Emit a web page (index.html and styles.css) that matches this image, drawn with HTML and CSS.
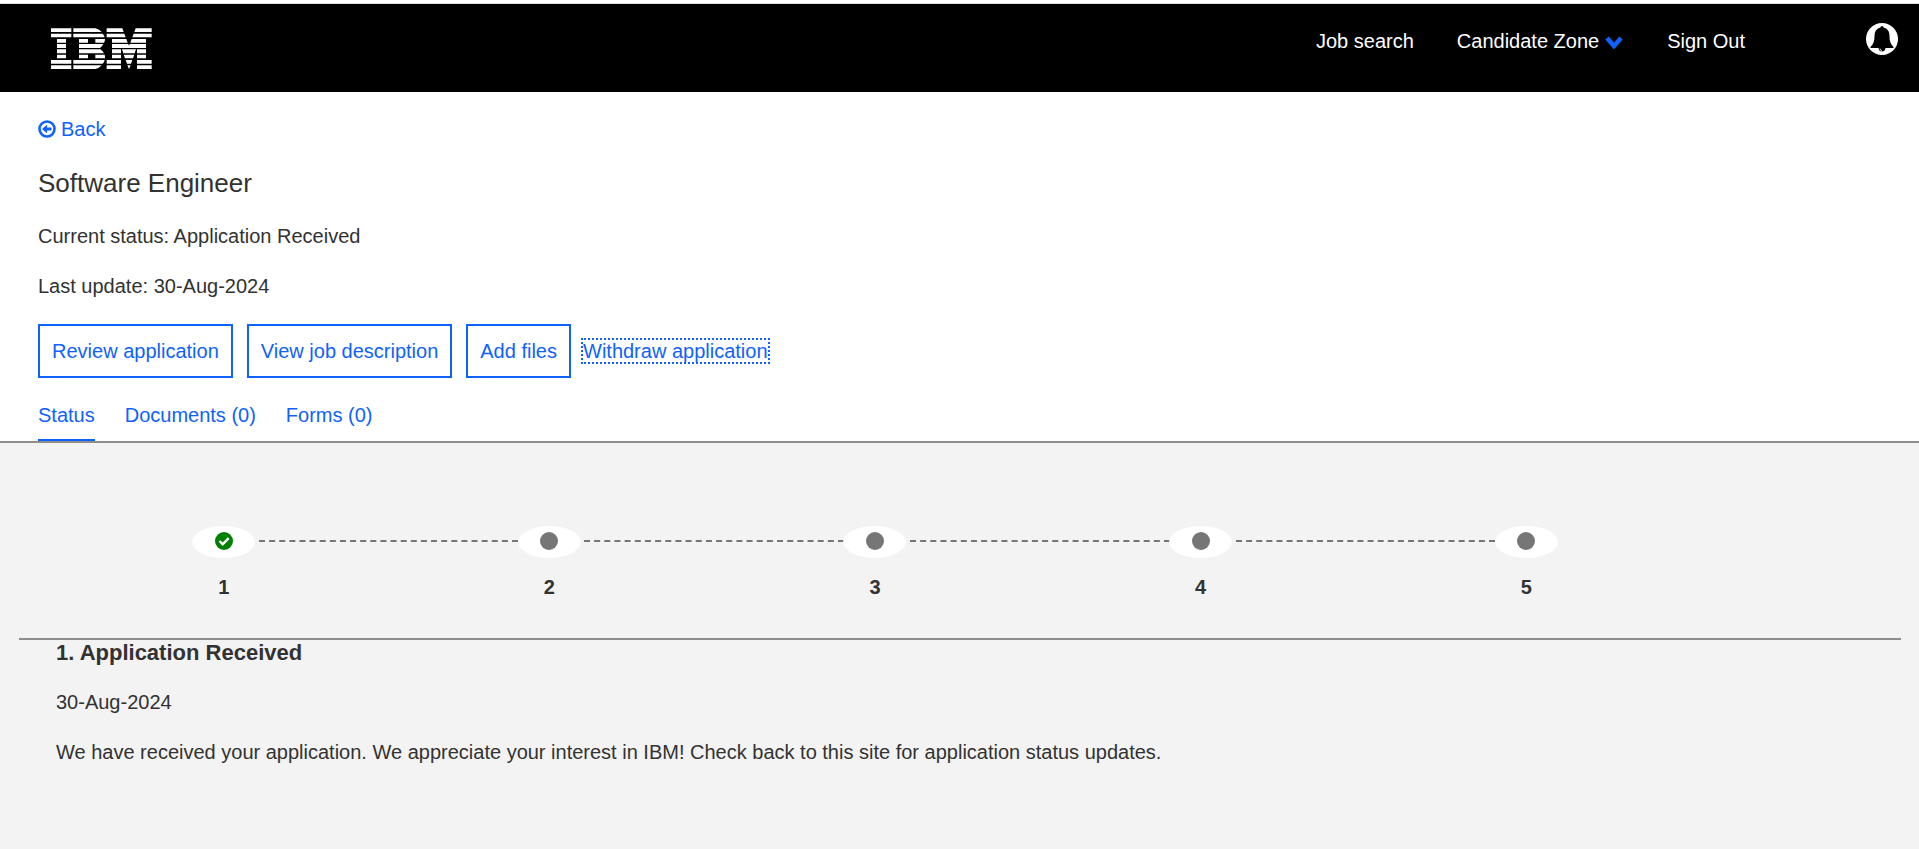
FILE: index.html
```
<!DOCTYPE html>
<html lang="en">
<head>
<meta charset="utf-8">
<title>Software Engineer - Application status</title>
<link rel="stylesheet" href="styles.css">
</head>
<body>
<header class="site-header">
  <a class="logo" href="#" aria-label="IBM">
    <svg viewBox="153 84 303 123" width="101" height="41" fill="#fff" aria-hidden="true">
      <path d="M153 85h61v11h-61zM153 101h61v11h-61zM171 117h27v11h-27zM171 132h27v12h-27zM171 148h27v12h-27zM171 164h27v11h-27zM153 180h61v11h-61zM153 196h61v11h-61z"/>
      <path d="M220 85h66q13 3 19 11h-85zM220 101h88q5 5 6 11h-94zM237 117h27v11h-27zM286 117h29q0 7-3 11h-26zM237 132h73q-4 8-10 12h-63zM237 148h64q7 4 11 12h-75zM237 164h27v11h-27zM286 164h28q2 6 1 11h-29zM220 180h94q-1 6-6 11h-88zM220 196h85q-6 8-19 11h-66z"/>
      <path d="M320 85h47l4 11h-51zM407 85h48v11h-52zM320 101h53l4 11h-57zM401 101h54v11h-58zM336 117h43l4 11h-47zM395 117h43v11h-47zM336 132h49l2 6 2-6h49v12h-102zM336 148h27v12h-27zM366 148h42l-4 12h-34zM411 148h27v12h-27zM336 164h27v11h-27zM371 164h32l-4 11h-24zM411 164h27v11h-27zM320 180h43v11h-43zM377 180h20l-4 11h-12zM411 180h44v11h-44zM320 196h43v11h-43zM382 196h10l-5 11zM411 196h44v11h-44z"/>
    </svg>
  </a>
  <nav class="main-nav" aria-label="Main">
    <a href="#">Job search</a>
    <a class="nav-menu" href="#">Candidate Zone
      <svg viewBox="0 0 20 15" width="20" height="15" aria-hidden="true"><path d="M3 4l7 8 7-8" fill="none" stroke="#0f62fe" stroke-width="4.500"/></svg>
    </a>
    <a href="#">Sign Out</a>
  </nav>
  <button class="bell" type="button" aria-label="Notifications">
    <svg viewBox="0 0 32 32" width="32" height="32" aria-hidden="true">
      <circle cx="16" cy="16" r="16" fill="#fff"/>
      <path d="M16 3q1.500 0 1.500 1.500c4 1 6 4 6 8.500 0 5 1 8 4 11v1H4.500v-1c3-3 4-6 4-11 0-4.500 2-7.500 6-8.500Q14.500 3 16 3zM12.500 25h7q-.5 3.500-3.500 3.500t-3.500-3.500z" fill="#000"/>
      <path d="M14 25.500q0 2 2 2.300" fill="none" stroke="#fff" stroke-width=".8"/>
    </svg>
  </button>
</header>
<main>
  <section class="summary">
    <a class="back" href="#">
      <svg viewBox="0 0 18 18" width="18" height="18" aria-hidden="true"><circle cx="9" cy="9" r="7.500" fill="none" stroke="#0f62fe" stroke-width="2.600"/><path d="M4 9l5-4.200v2.700h4.500v3H9v2.700z" fill="#0f62fe"/></svg>
      Back
    </a>
    <h1>Software Engineer</h1>
    <p>Current status: Application Received</p>
    <p>Last update: 30-Aug-2024</p>
    <div class="actions">
      <button class="btn" type="button">Review application</button>
      <button class="btn" type="button">View job description</button>
      <button class="btn" type="button">Add files</button>
      <a class="withdraw" href="#">Withdraw application</a>
    </div>
    <nav class="tabs" aria-label="Application">
      <a class="active" href="#">Status</a>
      <a href="#">Documents (0)</a>
      <a href="#">Forms (0)</a>
    </nav>
  </section>
  <section class="status">
    <ol class="steps">
      <li><span class="marker"><svg viewBox="0 0 18 18" width="18" height="18" aria-hidden="true"><circle cx="9" cy="9" r="9" fill="#008000"/><path d="M4.500 9l3.200 3.200 6-6" fill="none" stroke="#fff" stroke-width="2.400"/></svg></span>1</li>
      <li><span class="marker"><span class="dot"></span></span>2</li>
      <li><span class="marker"><span class="dot"></span></span>3</li>
      <li><span class="marker"><span class="dot"></span></span>4</li>
      <li><span class="marker"><span class="dot"></span></span>5</li>
    </ol>
    <div class="detail">
      <h2>1. Application Received</h2>
      <p>30-Aug-2024</p>
      <p>We have received your application. We appreciate your interest in IBM! Check back to this site for application status updates.</p>
    </div>
  </section>
</main>
</body>
</html>
```
FILE: styles.css
```
* {
  box-sizing: border-box;
}

body {
  display: flex;
  flex-direction: column;
  min-height: 100vh;
  margin: 0;
  padding-top: 3px;
  background: #fff;
  color: #323232;
  font: 20px/26px "Liberation Sans", Arial, sans-serif;
}

a {
  color: #0f62fe;
  text-decoration: none;
}

.site-header {
  display: flex;
  align-items: flex-start;
  height: 89px;
  padding: 19px 21px 0 51px;
  border-top: 1px solid #ddd;
  background: #000;
}

.logo {
  margin-top: 5px;
}

.logo svg,
.bell svg {
  display: block;
}

.main-nav {
  display: flex;
  gap: 43px;
  margin-top: 5px;
  margin-left: auto;
}

.main-nav a {
  color: #fff;
}

.nav-menu {
  display: flex;
  align-items: center;
  gap: 5px;
}

.bell {
  margin-left: 121px;
  padding: 0;
  border: 0;
  background: none;
}

main {
  display: flex;
  flex: 1;
  flex-direction: column;
}

.summary {
  padding: 24px 38px 0;
  border-bottom: 2px solid #8d8d8d;
}

.back {
  display: inline-flex;
  align-items: center;
  gap: 5px;
}

h1 {
  margin: 23px 0 24px;
  font-size: 26px;
  font-weight: 400;
  line-height: 32px;
}

p {
  margin: 0 0 24px;
}

.actions {
  display: flex;
  align-items: center;
  gap: 14px;
  margin-top: 25px;
}

.btn {
  height: 54px;
  padding: 0 12px;
  border: 2px solid #0f62fe;
  background: #fff;
  color: #0f62fe;
  font: inherit;
}

.withdraw {
  margin-left: -4px;
  border: 2px dotted #0f62fe;
  line-height: 22px;
}

.tabs {
  display: flex;
  gap: 30px;
  margin-top: 24px;
}

.tabs a {
  padding-bottom: 11px;
  border-bottom: 2px solid transparent;
}

.tabs .active {
  border-color: #0f62fe;
}

.status {
  flex: 1;
  padding: 83px 18px 0 19px;
  background: #f3f3f3;
}

.steps {
  display: grid;
  grid-template-columns: repeat(5, 1fr);
  margin: 0;
  padding: 0 212px 38px 42px;
  border-bottom: 2px solid #8d8d8d;
  list-style: none;
  font-weight: 700;
}

.steps li {
  display: flex;
  position: relative;
  flex-direction: column;
  align-items: center;
  gap: 16px;
}

.steps li:not(:last-child)::after {
  position: absolute;
  top: 14px;
  left: calc(50% + 35px);
  width: calc(100% - 66px);
  border-top: 2px dashed #767676;
  content: "";
}

.marker {
  display: flex;
  z-index: 1;
  justify-content: center;
  width: 63px;
  height: 32px;
  padding-top: 6px;
  border-radius: 50%;
  background: #fff;
}

.dot {
  width: 18px;
  height: 18px;
  border-radius: 50%;
  background: #767676;
}

.detail {
  padding: 0 37px;
}

h2 {
  margin: 0 0 24px;
  font-size: 22px;
  line-height: 25px;
}
```
